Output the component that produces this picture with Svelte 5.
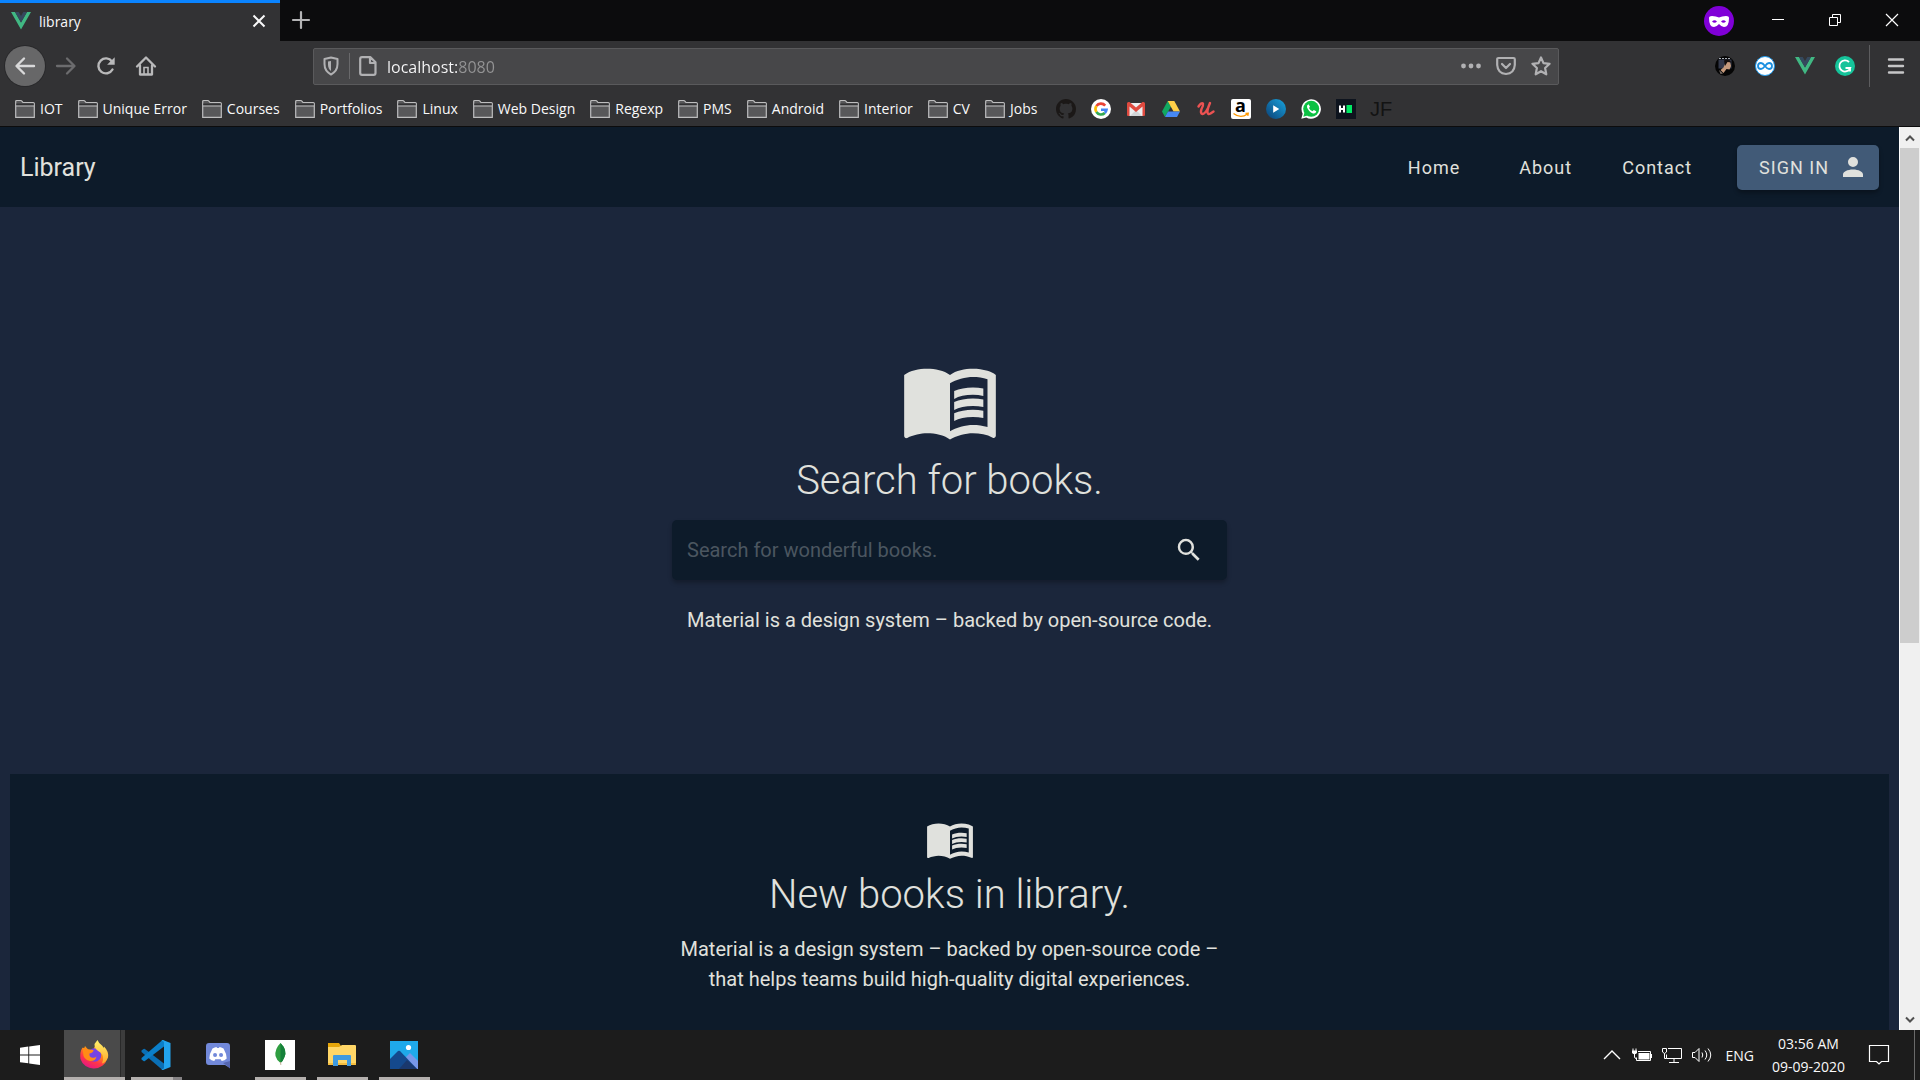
<script>
  const folders = ['IOT', 'Unique Error', 'Courses', 'Portfolios', 'Linux', 'Web Design', 'Regexp', 'PMS', 'Android', 'Interior', 'CV', 'Jobs'];
  const sites = ['GitHub', 'Google', 'Gmail', 'Drive', 'Udemy', 'Amazon', 'Player', 'WhatsApp', 'HackerRank', 'JF'];
  const extensions = ['Avatar', 'Infinity', 'Vue', 'Grammarly'];
  const apps = [
    { name: 'Firefox', state: 'active' },
    { name: 'VS Code', state: 'stacked' },
    { name: 'Discord', state: 'idle' },
    { name: 'MongoDB Compass', state: 'open' },
    { name: 'File Explorer', state: 'open' },
    { name: 'Photos', state: 'open' }
  ];
  let address = $state('localhost:8080');
  let query = $state('');
</script>

{#snippet vue()}
  <svg width="20" height="20" viewBox="0 0 20 20" aria-hidden="true">
    <path d="M0 1h4l6 10.500 6-10.500h4L10 18.500z" fill="#41b883" />
    <path d="M4 1h3.700L10 5l2.300-4H16L10 11.500z" fill="#35495e" />
  </svg>
{/snippet}

{#snippet book(size)}
  <svg width={size} height={size} viewBox="0 0 24 24" fill="#e0e1dd" aria-hidden="true">
    <path fill-rule="evenodd" d="M21 5c-1.110-.350-2.330-.500-3.500-.500-1.950 0-4.050.400-5.500 1.500-1.450-1.100-3.550-1.500-5.500-1.500S2.450 4.900 1 6v14.650c0 .250.250.500.500.500.100 0 .150-.050.250-.050C3.100 20.450 5.050 20 6.500 20c1.950 0 4.050.400 5.500 1.500 1.350-.850 3.800-1.500 5.500-1.500 1.650 0 3.350.300 4.750 1.050.100.050.150.050.250.050.250 0 .500-.250.500-.500V6c-.600-.450-1.250-.750-2-1zm0 13.500c-1.100-.350-2.300-.500-3.500-.500-1.700 0-4.150.650-5.500 1.500V8c1.350-.850 3.800-1.500 5.500-1.500 1.200 0 2.400.150 3.500.500v11.500z" />
    <path d="M17.500 10.750c.880 0 1.730.090 2.500.260V9.240c-.790-.150-1.640-.240-2.500-.240-1.700 0-3.240.290-4.500.830v1.900c1.130-.640 2.700-.980 4.500-.980zM13 12.490v1.900c1.130-.640 2.700-.980 4.500-.980.880 0 1.730.090 2.500.260V11.900c-.790-.150-1.640-.240-2.500-.240-1.700 0-3.240.300-4.500.830zm4.500 1.840c-1.700 0-3.240.290-4.500.830v1.900c1.130-.640 2.700-.980 4.500-.980.880 0 1.730.090 2.500.260v-1.770c-.790-.160-1.640-.240-2.500-.240z" />
  </svg>
{/snippet}

{#snippet favicon(name)}
  <svg width="20" height="20" viewBox="0 0 20 20" aria-hidden="true">
    {#if name === 'GitHub'}
      <path fill="#1b1817" transform="scale(1.25)" d="M8 0C3.580 0 0 3.580 0 8c0 3.540 2.290 6.530 5.470 7.590.400.070.550-.170.550-.380 0-.190-.010-.820-.010-1.490-2.010.370-2.530-.490-2.690-.940-.090-.230-.480-.940-.820-1.130-.280-.150-.680-.520-.010-.530.630-.010 1.080.580 1.230.820.720 1.210 1.870.870 2.330.660.070-.520.280-.870.510-1.070-1.780-.200-3.640-.890-3.640-3.950 0-.870.310-1.590.820-2.150-.080-.200-.360-1.020.080-2.120 0 0 .670-.210 2.200.820.640-.180 1.320-.270 2-.270s1.360.090 2 .270c1.530-1.040 2.200-.820 2.200-.820.440 1.100.160 1.920.080 2.120.510.560.820 1.270.820 2.150 0 3.070-1.870 3.750-3.650 3.950.290.250.540.730.540 1.480 0 1.070-.010 1.930-.010 2.200 0 .210.150.460.550.380A8.013 8.013 0 0 0 16 8c0-4.420-3.580-8-8-8z" />
    {:else if name === 'Google'}
      <circle cx="10" cy="10" r="10" fill="#fff" />
      <g fill="none" stroke-width="2.600">
        <path d="M14.200 6.600A5.500 5.500 0 0 0 5.400 7" stroke="#ea4335" />
        <path d="M5.400 7a5.500 5.500 0 0 0 0 6" stroke="#fbbc05" />
        <path d="M5.400 13a5.500 5.500 0 0 0 8.400 1" stroke="#34a853" />
        <path d="M13.800 14a5.500 5.500 0 0 0 1.700-3.200H10" stroke="#4285f4" />
      </g>
    {:else if name === 'Gmail'}
      <path fill="#eceff1" d="M2 4h16v13H2z" />
      <path fill="#d2d6d8" d="M4 17l6-6 6 6z" />
      <path fill="#e04a3f" d="M1 4.500Q1 3 2.500 3h1L10 8.500 16.500 3h1Q19 3 19 4.500V16q0 1-1 1h-1.500V7.500L10 13 3.500 7.500V17H2q-1 0-1-1z" />
    {:else if name === 'Drive'}
      <path fill="#11a861" d="M6.700 2L1 12.500 4 18l6-10.500z" />
      <path fill="#ffcf48" d="M6.700 2h6.600L19 12.500h-6.500z" />
      <path fill="#4688f4" d="M7 12.500h12L16 18H4z" />
    {:else if name === 'Udemy'}
      <path fill="none" stroke="#ec5252" stroke-width="2.400" stroke-linecap="round" stroke-linejoin="round" d="M2.500 7.500Q5.500 3 7 4.500 7.500 6.500 5.500 10 4 14.500 6.500 15q2.500 0 5.500-6L14 4q-3 7-2.500 9.500.500 2.500 3 1l3-2" />
    {:else if name === 'Amazon'}
      <rect width="20" height="20" rx="2" fill="#fff" />
      <text x="9.500" y="13" text-anchor="middle" class="amazon">a</text>
      <path fill="none" stroke="#f90" stroke-width="1.400" d="M2.500 14.500q7 5.500 14 .500M14.500 14.500l2.700-.200-.400 2.500" />
    {:else if name === 'Player'}
      <defs><linearGradient id="player" x1="0" y1="1" x2="1" y2="0"><stop stop-color="#0b3f74" /><stop offset="1" stop-color="#18a5e0" /></linearGradient></defs>
      <circle cx="10" cy="10" r="10" fill="url(#player)" />
      <path fill="#fff" d="M7.200 6.300v7.400l6-3.700z" />
    {:else if name === 'WhatsApp'}
      <path fill="#fff" d="M.300 19.800l1.400-5.100A9.700 9.700 0 1 1 5.300 18.400z" />
      <circle cx="10.200" cy="9.800" r="8" fill="#0cc143" />
      <path fill="#0cc143" d="M2.300 17.800l1.200-4.300 3 3z" />
      <path fill="#fff" d="M7.500 5.200q-2 .800-1.500 3 1.500 4.500 6 6.300 2.800.500 3.300-2.200l-2.500-1.300-1.300 1.300q-2.400-1-3.500-3.400L9 7.800z" />
    {:else if name === 'HackerRank'}
      <path fill="#0e141e" d="M0 0h20v20H0z" />
      <path fill="#fff" d="M3 6.500h2v2.500h2V6.500h2v7H7V11H5v2.500H3z" />
      <path fill="#00ea64" d="M10.500 6h5.500v8h-5.500z" />
    {:else}
      <text x="10" y="17" text-anchor="middle" class="jf">JF</text>
    {/if}
  </svg>
{/snippet}

{#snippet extension(name)}
  {#if name === 'Vue'}
    {@render vue()}
  {:else}
    <svg width="20" height="20" viewBox="0 0 20 20" aria-hidden="true">
      {#if name === 'Avatar'}
        <circle cx="10" cy="10" r="10" fill="#050505" />
        <path fill="#33384a" d="M3.500 3.500h13v9h-13z" />
        <path fill="#a8adb5" d="M4 2h2v1H4zM7 2h2v1H7zM10 2h2v1h-2zM13 2h2v1h-2z" />
        <path fill="#c69a7c" d="M11 5.500l4 .500 1 4-1.500 3.500-3-.500-3 4-3-3 3-2.500z" />
        <path fill="#130e0d" d="M9 4.500q5-2.500 7.500 2L12.500 6l-2.500 4z" />
        <path fill="#7c706a" d="M4 14l4 3.500-2.500.500z" />
      {:else if name === 'Infinity'}
        <circle cx="10" cy="10" r="9.500" fill="#fff" stroke="#1d9bf0" />
        <path fill="none" stroke="#1a8fe0" stroke-width="1.800" d="M10 10C8.500 8 7.500 7 6 7a3 3 0 0 0 0 6c1.500 0 2.500-1 4-3s2.500-3 4-3a3 3 0 0 1 0 6c-1.500 0-2.500-1-4-3z" />
      {:else}
        <circle cx="10" cy="10" r="10" fill="#15c39a" />
        <path fill="none" stroke="#fff" stroke-width="1.800" d="M14 6a5.600 5.600 0 1 0 1.200 6H10.500M15 11v4.500" />
      {/if}
    </svg>
  {/if}
{/snippet}

{#snippet appIcon(name)}
  <svg width="30" height="30" viewBox="0 0 30 30" aria-hidden="true">
    {#if name === 'Firefox'}
      <defs>
        <linearGradient id="fox" x1=".8" y1="0" x2=".3" y2="1"><stop stop-color="#fff44f" /><stop offset=".4" stop-color="#ff980e" /><stop offset=".7" stop-color="#ff3647" /><stop offset="1" stop-color="#e31587" /></linearGradient>
        <linearGradient id="tail" x1="0" y1="0" x2="0" y2="1"><stop stop-color="#fff36b" /><stop offset="1" stop-color="#ffa52a" /></linearGradient>
      </defs>
      <path fill="url(#fox)" d="M3.500 7.500l1.500 1.500 1-3 3 3.500 5 .500 4-8q1 3.500 4 5l3.500 3q3.500 4 2.500 9a13.500 12 0 0 1-13 9.500A13.500 13.500 0 0 1 1.500 19Q.500 12 3.500 7.500z" />
      <circle cx="15.500" cy="15" r="6.800" fill="#7543e3" />
      <path fill="url(#tail)" d="M18.500 0q1 3 4.500 5.500l2 2.500v-1.500q5 5 4 11-2 5-6 6 3-7-1.500-11Q15 9 15.500 4z" />
      <path fill="#ff8b16" d="M3.500 8q3-1 6 1.500l5 .500q0 2.500-4 3.500-.500 3 2 4 3 1 5-1-1 5-6.500 4.500Q4 20 4 12z" />
    {:else if name === 'VS Code'}
      <path fill="#0a6fb5" d="M.500 10.500l2-1.500q.700-.400 1.400 0L23 23.500V29l-1.500 1L.500 12z" />
      <path fill="#0b7fc9" d="M.500 19.500l2 1.500q.700.400 1.400 0L23 6.500V1L21.500 0 .500 18z" />
      <path fill="#22a3ee" d="M22 0l7.500 3v24L22 30q-1 0-1.500-1 2.500.500 2.500-1.500v-25Q23 .500 20.500 1 21 0 22 0z" />
    {:else if name === 'Discord'}
      <path fill="#7289da" d="M6 3h18q3 0 3 3v22l-5-3H6q-3 0-3-3V6q0-3 3-3z" />
      <path fill="#5566b0" d="M20 23l7-2v7.500l-4-3.500z" />
      <path fill="#fff" fill-rule="evenodd" d="M9.500 8.500q2.500-1.500 4-1.500l.500 1h2l.500-1q1.500 0 4 1.500 3 5 3.200 10-2 2.300-5 2.500l-1-1.700h-5.400l-1 1.700q-3-.200-5-2.500.200-5 3.200-10zM12 13a2 2 0 1 0 .1 4 2 2 0 0 0-.1-4zm6 0a2 2 0 1 0 .1 4 2 2 0 0 0-.1-4z" />
    {:else if name === 'MongoDB Compass'}
      <path fill="#fff" d="M0 0h30v30H0z" />
      <path fill="#2f9e41" d="M15.500 3q7 7 4 14-1.500 4-4 6-4-3-5-7-1-7 5-13z" />
      <path fill="#15803a" d="M15.500 3q7 7 4 14-1.500 4-4 6z" />
      <path fill="#b8a58a" d="M15 22h1l.300 3h-.800z" />
    {:else if name === 'File Explorer'}
      <path fill="#e5a50a" d="M1 3h11l2 3v4H1z" />
      <path fill="#ffd667" d="M1 7h11l3-2h13q1 0 1 1v19H1z" />
      <path fill="#f5bd3e" d="M1 23h28v2H1z" />
      <path fill="#3f9ae0" d="M6 16q0-1 1-1h16q1 0 1 1v10h-4v-6h-9v6H6z" />
    {:else}
      <path fill="#1fa9ea" d="M1 1h28v28H1z" />
      <path fill="#7897e8" d="M13 21l8-8 8 8v8H13z" />
      <path fill="#14498d" d="M1 19l8-8q1-.500 2 0L28 29H1z" />
      <path fill="#1a386d" d="M10 29l8-9 10 9z" />
      <circle cx="19.500" cy="7.500" r="2.600" fill="#fff" />
    {/if}
  </svg>
{/snippet}

<div class="desktop">
  <header class="browser">
    <div class="tabs">
      <div class="tab">
        {@render vue()}
        <span class="tab-title">library</span>
        <button aria-label="Close tab"><svg width="14" height="14" viewBox="0 0 14 14"><path d="M1.500 1.500l11 11m0-11l-11 11" fill="none" stroke="#f9f9fa" stroke-width="2" /></svg></button>
      </div>
      <button class="new-tab" aria-label="New tab"><svg width="18" height="18" viewBox="0 0 18 18"><path d="M9 1v16M1 9h16" fill="none" stroke="#b4b4b5" stroke-width="2.200" stroke-linecap="round" /></svg></button>
      <svg class="private" width="30" height="30" viewBox="0 0 30 30" role="img" aria-label="Private browsing">
        <circle cx="15" cy="15" r="15" fill="#8000d7" />
        <path fill="#fff" fill-rule="evenodd" d="M5 12q0-2 3-2 4 0 7 1.500Q18 10 22 10q3 0 3 2 0 9-5 9-2.500 0-5-3-2.500 3-5 3-5 0-5-9zm3 3.500q2.500 2.500 5 0-2.500-2.500-5 0zm9 0q2.500 2.500 5 0-2.500-2.500-5 0z" />
      </svg>
      <div class="window-buttons">
        <button aria-label="Minimize"><svg width="14" height="14" viewBox="0 0 14 14"><path d="M1 6.500h12" stroke="#fff" /></svg></button>
        <button aria-label="Restore"><svg width="14" height="14" viewBox="0 0 14 14"><path d="M1.500 4.500h8v8h-8zM4.500 4V1.500h8v8H10" fill="none" stroke="#fff" /></svg></button>
        <button aria-label="Close"><svg width="14" height="14" viewBox="0 0 14 14"><path d="M1 1l12 12m0-12L1 13" fill="none" stroke="#fff" stroke-width="1.200" /></svg></button>
      </div>
    </div>

    <div class="toolbar">
      <button class="tool back" aria-label="Back"><svg width="20" height="20" viewBox="0 0 20 20"><path d="M19 10H2M9 2.500L1.500 10 9 17.500" fill="none" stroke="#d8d8d9" stroke-width="2.400" stroke-linecap="round" stroke-linejoin="round" /></svg></button>
      <button class="tool" aria-label="Forward"><svg width="20" height="20" viewBox="0 0 20 20"><path d="M1 10h17M11 2.500l7.500 7.500-7.500 7.500" fill="none" stroke="#6c6c6e" stroke-width="2.300" stroke-linecap="round" stroke-linejoin="round" /></svg></button>
      <button class="tool" aria-label="Reload"><svg width="20" height="20" viewBox="0 0 20 20"><path d="M16.500 13.500a7.500 7.500 0 1 1-.500-8" fill="none" stroke="#b9b9ba" stroke-width="2.400" stroke-linecap="round" /><path d="M18.700 1.200v7.600h-7.600z" fill="#b9b9ba" /></svg></button>
      <button class="tool" aria-label="Home"><svg width="20" height="20" viewBox="0 0 20 20"><path d="M1 10.500L10 1.500l9 9M4 9.500V18.500h12V9.500" fill="none" stroke="#b9b9ba" stroke-width="2.300" stroke-linecap="round" stroke-linejoin="round" /><path d="M8 18v-6.500h4V18" fill="none" stroke="#b9b9ba" stroke-width="1.600" /></svg></button>

      <div class="address">
        <svg width="20" height="20" viewBox="0 0 20 20" aria-hidden="true"><path d="M10 1.500l6.500 1.500v5q0 7-6.500 10.500Q3.500 15 3.500 8V3z" fill="none" stroke="#b1b1b3" stroke-width="2" stroke-linejoin="round" /><path d="M10 5v10Q7 12.500 7 8.500V5.600z" fill="#b1b1b3" /></svg>
        <span class="split"></span>
        <svg width="20" height="20" viewBox="0 0 20 20" aria-hidden="true"><path d="M4 1.200h8.500l5 5V17q0 1.800-1.800 1.800H4Q2.200 18.800 2.200 17V3Q2.200 1.200 4 1.200zM12 1.500V7h5.500" fill="none" stroke="#b1b1b3" stroke-width="2.200" stroke-linejoin="round" /></svg>
        <input aria-label="Address" bind:value={address} />
        <button aria-label="Page actions"><svg width="20" height="20" viewBox="0 0 20 20" fill="#b1b1b3"><circle cx="2.500" cy="10" r="2.400" /><circle cx="10" cy="10" r="2.400" /><circle cx="17.500" cy="10" r="2.400" /></svg></button>
        <button aria-label="Save to Pocket"><svg width="20" height="20" viewBox="0 0 20 20" fill="none" stroke="#b1b1b3" stroke-width="2.200" stroke-linecap="round" stroke-linejoin="round"><path d="M2.500 2h15q1.300 0 1.300 1.300V9q-.600 8.500-8.800 9Q1.800 17.500 1.200 9V3.300Q1.200 2 2.500 2z" /><path d="M6 8l4 4 4-4" /></svg></button>
        <button aria-label="Bookmark page"><svg width="20" height="20" viewBox="0 0 20 20"><path d="M10 1.500l2.500 5.600 6.100.700-4.500 4.200 1.200 6.300L10 15.200l-5.300 3.100 1.200-6.300L1.400 7.800l6.100-.700z" fill="none" stroke="#b1b1b3" stroke-width="2.200" stroke-linejoin="round" /></svg></button>
      </div>

      {#each extensions as name}
        <button class="tool" aria-label={name}>{@render extension(name)}</button>
      {/each}
      <span class="menu-split"></span>
      <button class="tool" aria-label="Open menu"><svg width="20" height="20" viewBox="0 0 20 20"><path d="M3 3.500h14M3 10h14M3 16.500h14" stroke="#c6c6c7" stroke-width="2.400" stroke-linecap="round" /></svg></button>
    </div>

    <nav class="bookmarks" aria-label="Bookmarks">
      {#each folders as name}
        <button class="folder">
          <svg width="20" height="20" viewBox="0 0 20 20" aria-hidden="true"><path d="M.700 18.300V2.500q0-1 1-1h4q.800 0 1.400.800l.900 1.200h10.300q1 0 1 1v13.800z" fill="#58585a" stroke="#bdbdbe" stroke-width="1.200" /><path d="M1.300 5.500h17.400" stroke="#323234" stroke-width="2" /><path d="M1 7h18" stroke="#bdbdbe" /></svg>
          {name}
        </button>
      {/each}
      {#each sites as name}
        <button class="site" aria-label={name}>{@render favicon(name)}</button>
      {/each}
    </nav>
  </header>

  <div class="viewport">
    <div class="page">
      <header class="app-bar">
        <h1>Library</h1>
        <nav aria-label="Main">
          <a class="home" href="#home">Home</a>
          <a href="#about">About</a>
          <a href="#contact">Contact</a>
        </nav>
        <button class="sign-in">
          <span>SIGN IN</span>
          <svg width="30" height="30" viewBox="0 0 24 24" fill="#e0e1dd" aria-hidden="true"><path d="M12 4a4 4 0 0 1 4 4 4 4 0 0 1-4 4 4 4 0 0 1-4-4 4 4 0 0 1 4-4m0 10c4.420 0 8 1.790 8 4v2H4v-2c0-2.210 3.580-4 8-4z" /></svg>
        </button>
      </header>

      <section class="hero">
        {@render book(100)}
        <h2>Search for books.</h2>
        <form class="search" onsubmit={(e) => e.preventDefault()}>
          <input type="text" aria-label="Search books" placeholder="Search for wonderful books." bind:value={query} />
          <button aria-label="Search"><svg width="30" height="30" viewBox="0 0 24 24" fill="#e0e1dd"><path d="M9.500 3A6.500 6.500 0 0 1 16 9.500c0 1.610-.590 3.090-1.560 4.230l.270.270h.790l5 5-1.500 1.500-5-5v-.790l-.270-.270A6.516 6.516 0 0 1 9.500 16a6.500 6.500 0 0 1 0-13m0 2C7 5 5 7 5 9.500S7 14 9.500 14 14 12 14 9.500 12 5 9.500 5z" /></svg></button>
        </form>
        <p>Material is a design system – backed by open-source code.</p>
      </section>

      <section class="latest">
        {@render book(50)}
        <h2>New books in library.</h2>
        <p>Material is a design system – backed by open-source code – that helps teams build high-quality digital experiences.</p>
      </section>
    </div>

    <div class="scrollbar">
      <button aria-label="Scroll up"><svg width="10" height="8" viewBox="0 0 10 8"><path d="M1 6.500l4-4 4 4" fill="none" stroke="#505050" stroke-width="2" /></svg></button>
      <div class="track"><div class="thumb"></div></div>
      <button aria-label="Scroll down"><svg width="10" height="8" viewBox="0 0 10 8"><path d="M1 1.500l4 4 4-4" fill="none" stroke="#505050" stroke-width="2" /></svg></button>
    </div>
  </div>

  <footer class="taskbar">
    <button class="start" aria-label="Start"><svg width="20" height="20" viewBox="0 0 20 20" fill="#fff"><path d="M0 2.800l8.300-1.200v7.900H0zM9.200 1.500L20 0v9.500H9.200zM0 10.400h8.300v7.900L0 17.200zM9.200 10.400H20V20L9.200 18.500z" /></svg></button>
    {#each apps as app}
      <button class="app {app.state}" aria-label={app.name}>{@render appIcon(app.name)}</button>
    {/each}
    <div class="tray">
      <button aria-label="Show hidden icons"><svg width="20" height="20" viewBox="0 0 20 20"><path d="M2 14l8-8 8 8" fill="none" stroke="#fff" stroke-width="1.400" /></svg></button>
      <button aria-label="Battery"><svg width="20" height="20" viewBox="0 0 20 20"><path d="M6 6.500h12.500v9H4.500v-3M19.500 9v4M1 3.500v3M4 3.500v3M2.500 9v3q0 1.500 2 1.500" fill="none" stroke="#fff" /><path d="M0 5.500h5V8q-2.500 2.500-5 0zM6.500 8h11v6.500h-11z" fill="#fff" /></svg></button>
      <button aria-label="Network"><svg width="20" height="20" viewBox="0 0 20 20"><path d="M6 3.500h13.500v10h-15V9.500M12 13.500v4M7 17.500h10M.500 3.500h4v3.500l-2 1.500-2-1.500zM2.500 8.500v5h2" fill="none" stroke="#fff" /></svg></button>
      <button aria-label="Volume"><svg width="20" height="20" viewBox="0 0 20 20"><path d="M.500 7.500H3l4-4v13l-4-4H.500zM10 7.500q1.500 2.500 0 5M13 5.500q3.500 4.500 0 9M16 3.500q5.500 6.500 0 13" fill="none" stroke="#fff" /></svg></button>
      <button class="language">ENG</button>
      <button class="clock"><span>03:56 AM</span><span>09-09-2020</span></button>
      <button aria-label="Notifications"><svg width="20" height="20" viewBox="0 0 20 20"><path d="M.500.500h19v16h-7L10 19l-2.500-2.500h-7z" fill="none" stroke="#fff" stroke-width="1.200" /></svg></button>
    </div>
    <button class="show-desktop" aria-label="Show desktop"></button>
  </footer>
</div>

<style>
  :global(body) {
    margin: 0;
  }
  .desktop,
  .desktop :global(*) {
    box-sizing: border-box;
  }
  .desktop {
    display: flex;
    flex-direction: column;
    height: 100vh;
    overflow: hidden;
    font-family: 'Open Sans', 'Noto Sans', sans-serif;
    color: #f9f9fa;
  }
  button,
  input {
    margin: 0;
    padding: 0;
    border: 0;
    background: none;
    color: inherit;
    font: inherit;
  }
  button {
    display: flex;
    flex: none;
    align-items: center;
    justify-content: center;
  }
  svg {
    display: block;
    flex: none;
    overflow: visible;
  }
  h1,
  h2,
  p {
    margin: 0;
    font-weight: 400;
  }

  /* Browser chrome */
  .browser {
    flex: none;
    background: #323234;
    border-bottom: 1px solid #0c0c0d;
  }
  .tabs {
    display: flex;
    align-items: flex-start;
    height: 41px;
    background: #0c0c0d;
  }
  .tab {
    display: flex;
    align-items: center;
    width: 280px;
    height: 41px;
    padding: 0 14px 2px 11px;
    border-top: 3px solid #0a84ff;
    background: #323234;
    font-size: 14px;
  }
  .tab-title {
    flex: 1;
    margin-left: 8px;
  }
  .new-tab {
    width: 42px;
    height: 40px;
  }
  .private {
    margin: 6px 15px 0 auto;
  }
  .window-buttons {
    display: flex;
  }
  .window-buttons button {
    width: 57px;
    height: 40px;
  }
  .toolbar {
    display: flex;
    align-items: center;
    height: 50px;
    padding: 0 4px 0 5px;
  }
  .tool {
    width: 40px;
    height: 40px;
  }
  .back {
    margin-right: 1px;
    border-radius: 50%;
    background: #676768;
    box-shadow: 0 0 0 1px #29292b;
  }
  .address {
    display: flex;
    flex: 1;
    align-items: center;
    gap: 8px;
    height: 37px;
    margin: 0 146px 0 147px;
    padding: 0 7px;
    border: 1px solid #5a5a5c;
    border-radius: 2px;
    background: #474749;
  }
  .address input {
    flex: 1;
    min-width: 0;
    height: 30px;
    padding: 2px 0 0 1px;
    outline: 0;
    background: linear-gradient(90deg, #f9f9fa 73px, #949495 73px);
    background-clip: text;
    color: transparent;
    font-size: 16px;
  }
  .address button + button {
    margin-left: 7px;
  }
  .split {
    width: 1px;
    height: 26px;
    background: #69696b;
  }
  .menu-split {
    width: 1px;
    height: 42px;
    margin: 0 6px 0 4px;
    background: #5d5d5f;
  }
  .bookmarks {
    display: flex;
    align-items: center;
    gap: 15px;
    height: 35px;
    padding: 0 15px;
    font-size: 14px;
  }
  .folder {
    gap: 5px;
    white-space: nowrap;
  }
  .folder + .site {
    margin-left: 4px;
  }
  .amazon {
    fill: #000;
    font: 700 18px 'Open Sans', sans-serif;
  }
  .jf {
    fill: #131313;
    font: 20px 'Liberation Sans', sans-serif;
  }

  /* Web page */
  .viewport {
    display: flex;
    flex: 1;
    min-height: 0;
    background: #1b263b;
  }
  .page {
    flex: 1;
    min-width: 0;
    overflow: hidden;
    font-family: Roboto, sans-serif;
    font-size: 20px;
    line-height: 30px;
    color: #e0e1dd;
  }
  .app-bar {
    display: flex;
    align-items: center;
    height: 80px;
    padding: 0 20px;
    background: #0d1b2a;
  }
  .app-bar h1 {
    flex: 1;
    padding-top: 2px;
    font-size: 25px;
  }
  .app-bar nav {
    display: flex;
    gap: 50px;
    margin-right: 45px;
  }
  .app-bar a {
    color: inherit;
    text-decoration: none;
  }
  .app-bar a,
  .sign-in {
    font-size: 18px;
    letter-spacing: 1px;
  }
  .app-bar a,
  .sign-in span {
    padding-top: 2px;
  }
  .app-bar .home {
    margin-right: 9px;
  }
  .sign-in {
    gap: 9px;
    height: 45px;
    padding: 0 11px 0 22px;
    border-radius: 5px;
    background: #415a77;
    box-shadow: 0 3px 4px rgb(0 0 0 / 30%);
  }
  .hero,
  .latest {
    display: flex;
    flex-direction: column;
    align-items: center;
    text-align: center;
  }
  .hero {
    padding: 143px 15px 139px;
  }
  h2 {
    padding-top: 1px;
    font-size: 40px;
    font-weight: 300;
    line-height: 60px;
    margin-bottom: 9px;
  }
  .search {
    display: flex;
    align-items: center;
    width: 100%;
    max-width: 555px;
    height: 60px;
    margin-bottom: 25px;
    padding: 0 23px 0 15px;
    border-radius: 5px;
    background: #0d1b2a;
    box-shadow: 0 3px 4px rgb(0 0 0 / 25%);
  }
  .search input {
    flex: 1;
    min-width: 0;
    outline: 0;
  }
  .search input::placeholder {
    color: #4b5660;
    opacity: 1;
  }
  .latest {
    margin: 0 10px;
    padding: 40px 15px;
    background: #0d1b2a;
  }
  .latest p {
    max-width: 555px;
  }
  .scrollbar {
    display: flex;
    flex: none;
    flex-direction: column;
    width: 21px;
    border-left: 1px solid #fff;
    background: #f0f0f0;
  }
  .scrollbar button {
    height: 21px;
  }
  .track {
    flex: 1;
    padding-right: 1px;
  }
  .thumb {
    height: 57.5%;
    background: #cdcdcd;
  }

  /* Taskbar */
  .taskbar {
    display: flex;
    flex: none;
    height: 50px;
    background: #1c1c1c;
    font-size: 14px;
  }
  .start {
    width: 60px;
    margin-right: 4px;
  }
  .app {
    width: 51px;
    margin-left: 11px;
    border-bottom: 3px solid transparent;
    padding: 3px 2px 0 0;
  }
  .open {
    border-bottom-color: #b4b0ae;
  }
  .active {
    width: 61px;
    margin: 0 -5px 0 0;
    border-bottom-color: #b4b0ae;
    background: linear-gradient(90deg, #4a4a4a 56px, #292929 56px 57px, #3c3c3c 57px);
  }
  .stacked {
    border-image: linear-gradient(90deg, #b4b0ae 40px, #858284 40px) 3;
  }
  .tray {
    display: flex;
    align-items: center;
    gap: 10px;
    margin-left: auto;
  }
  .language {
    margin-left: 3px;
  }
  .clock {
    flex-direction: column;
    margin: 0 14px 0 8px;
    line-height: 23px;
  }
  .show-desktop {
    width: 6px;
    margin-left: 25px;
    border-left: 1px solid #6a6a6a;
  }
</style>
